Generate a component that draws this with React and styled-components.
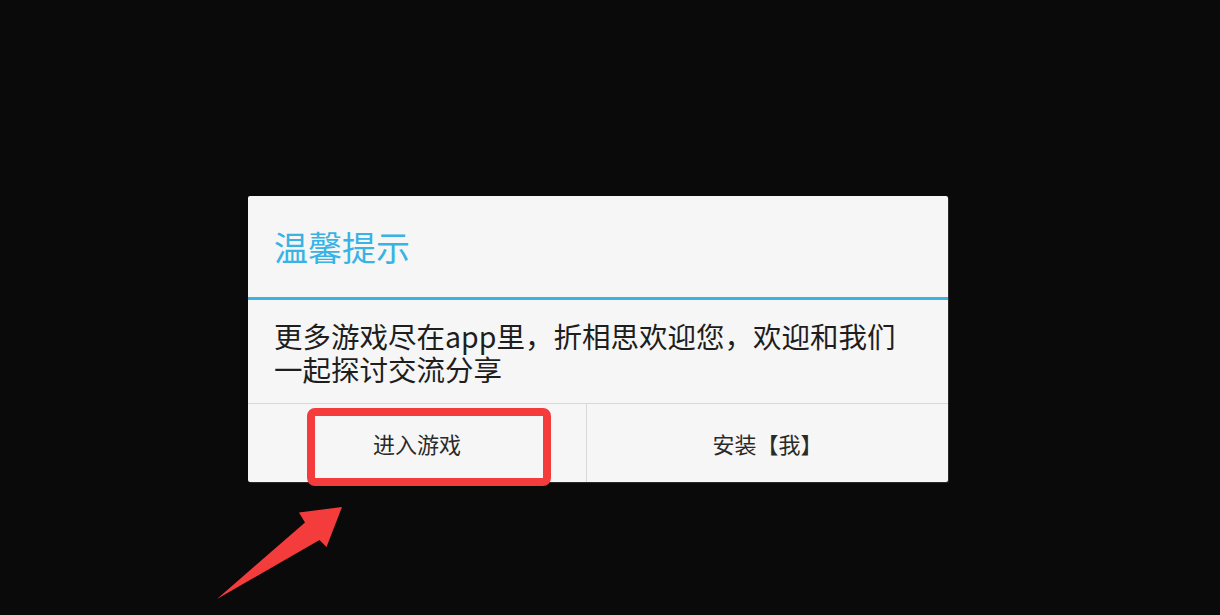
import React from "react";
import styled, { createGlobalStyle } from "styled-components";

const Global = createGlobalStyle`
  html, body { margin: 0; padding: 0; background: #0b0a0b; }
  body { font-family: "Noto Sans CJK SC", "Noto Sans", sans-serif; }
`;

const Screen = styled.div`
  position: relative;
  width: 1220px;
  height: 615px;
  overflow: hidden;
  background: #0b0a0b;
  padding: 196px 0 0 248px;
  box-sizing: border-box;
`;

const Dialog = styled.div`
  position: relative;
  width: 700px;
  display: flex;
  flex-direction: column;
  background: #f6f6f6;
  border-radius: 2px;
  box-shadow: 1px 1px 0 #2a2a2a;
`;

const TitleBar = styled.div`
  height: 101px;
  display: flex;
  align-items: center;
  padding-left: 26px;
  border-bottom: 3px solid #38b3e3;
  color: #38b3e3;
  font-size: 34px;
  line-height: 1;
`;

const Message = styled.div`
  height: 104px;
  display: flex;
  align-items: center;
  padding: 0 40px 0 26px;
  box-sizing: border-box;
  color: #1e1e1e;
  font-size: 28.5px;
  line-height: 33px;
  border-bottom: 1px solid #d8d8d8;
`;

const ButtonRow = styled.div`
  height: 78px;
  display: grid;
  grid-template-columns: 338px 1fr;
`;

const Button = styled.div`
  display: flex;
  align-items: center;
  justify-content: center;
  font-size: 22px;
  color: #2a2a2a;
  border-left: ${(p) => (p.$divider ? "1px solid #d8d8d8" : "none")};
`;

const Highlight = styled.div`
  position: absolute;
  left: 59px;
  top: 212px;
  width: 244px;
  height: 78px;
  box-sizing: border-box;
  border: 8px solid #f43c3c;
  border-radius: 8px;
  pointer-events: none;
`;

const Arrow = styled.svg`
  position: absolute;
  left: 200px;
  top: 500px;
`;

export default function App() {
  return (
    <>
      <Global />
      <Screen>
        <Dialog>
          <TitleBar>温馨提示</TitleBar>
          <Message>
            更多游戏尽在app里，折相思欢迎您，欢迎和我们一起探讨交流分享
          </Message>
          <ButtonRow>
            <Button>进入游戏</Button>
            <Button $divider>安装【我】</Button>
          </ButtonRow>
          <Highlight />
        </Dialog>
        <Arrow width="150" height="110" viewBox="200 500 150 110">
          <polygon
            points="342,507 299,512.5 305,522.5 217,599 319.5,540 326.5,547"
            fill="#f43c3c"
          />
        </Arrow>
      </Screen>
    </>
  );
}
